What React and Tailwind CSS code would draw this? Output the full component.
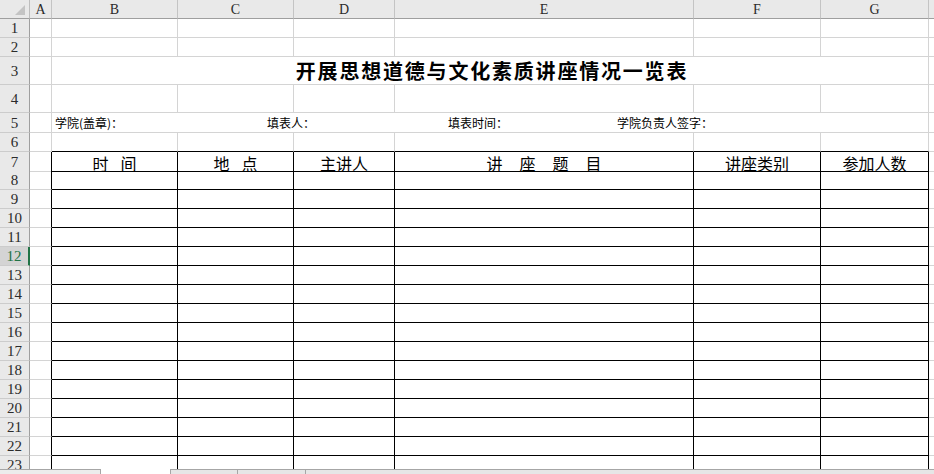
import React from "react";

const COLS =
  "grid grid-cols-[30px_22px_126px_116px_101px_299px_127px_108px_1fr]";
const G = "border-r border-b border-[#d4d4d4]";
const T = "border-r border-b border-black";
const CJK = "font-['Noto_Sans_CJK_SC',sans-serif]";

function RowHead({ n, selected }) {
  if (selected) {
    return (
      <div className="flex items-center justify-center bg-[#d4d4d4] border-r-2 border-b border-r-[#217346] border-b-[#cccccc] font-['Liberation_Serif',serif] text-[15px] leading-none text-[#217346] pt-[1px]">
        {n}
      </div>
    );
  }
  return (
    <div className="flex items-center justify-center bg-[#e9e9e9] border-r border-b border-r-[#9f9f9f] border-b-[#cccccc] font-['Liberation_Serif',serif] text-[15px] leading-none text-[#2b2b2b] pt-[1px]">
      {n}
    </div>
  );
}

function PlainRow({ n, h }) {
  return (
    <div className={`${COLS} ${h}`}>
      <RowHead n={n} />
      <div className={G} />
      <div className={G} />
      <div className={G} />
      <div className={G} />
      <div className={G} />
      <div className={G} />
      <div className={G} />
      <div className="border-b border-[#d4d4d4]" />
    </div>
  );
}

function HeaderCell({ label, gap }) {
  const chars = label.split("");
  return (
    <div className={`${T} flex items-start justify-center pt-[3px]`}>
      <div
        className={`flex ${CJK} text-[16px] leading-[16px] text-black ${gap}`}
      >
        {chars.map((c, i) => (
          <span key={i}>{c}</span>
        ))}
      </div>
    </div>
  );
}

function TableRow({ n, selected }) {
  return (
    <div className={`${COLS} h-[19px]`}>
      <RowHead n={n} selected={selected} />
      <div className="border-r border-b border-r-black border-b-[#d4d4d4]" />
      <div className={T} />
      <div className={T} />
      <div className={T} />
      <div className={T} />
      <div className={T} />
      <div className={T} />
      <div className="border-b border-[#d4d4d4]" />
    </div>
  );
}

export default function App() {
  const letters = ["A", "B", "C", "D", "E", "F", "G"];
  const tableRows = [];
  for (let i = 8; i <= 23; i++) tableRows.push(i);

  return (
    <div className="w-[934px] h-[474px] overflow-hidden bg-white flex flex-col">
      <div className="h-[469px] overflow-hidden">
        {/* column header */}
        <div className={`${COLS} h-[19px]`}>
          <div className="relative bg-[#e9e9e9] border-r border-b border-r-[#bdbdbd] border-b-[#9f9f9f]">
            <svg
              className="absolute right-[4px] bottom-[3px]"
              width="10"
              height="10"
              viewBox="0 0 10 10"
            >
              <polygon points="10,0 10,10 0,10" fill="#c4c4c4" />
            </svg>
          </div>
          {letters.map((l) => (
            <div
              key={l}
              className="flex items-center justify-center bg-[#e9e9e9] border-r border-b border-r-[#c4c4c4] border-b-[#9f9f9f] font-['Liberation_Serif',serif] text-[14px] leading-none text-[#2b2b2b] pt-[2px]"
            >
              {l}
            </div>
          ))}
          <div className="bg-[#e9e9e9] border-b border-b-[#9f9f9f]" />
        </div>

        <PlainRow n={1} h="h-[19px]" />
        <PlainRow n={2} h="h-[19px]" />

        {/* row 3 title */}
        <div className={`${COLS} h-[28px]`}>
          <RowHead n={3} />
          <div className={G} />
          <div
            className={`col-span-6 ${G} flex items-center justify-center pl-[4px] ${CJK} font-bold text-[20px] leading-none tracking-[1.8px] text-black`}
          >
            开展思想道德与文化素质讲座情况一览表
          </div>
          <div className="border-b border-[#d4d4d4]" />
        </div>

        <PlainRow n={4} h="h-[28px]" />

        {/* row 5 */}
        <div className={`${COLS} h-[20px]`}>
          <RowHead n={5} />
          <div className={G} />
          <div
            className={`col-span-6 ${G} flex items-end pb-[3px] pl-[3px] ${CJK} text-[12px] leading-[12px] text-black`}
          >
            <span className="w-[212px] shrink-0">学院(盖章)：</span>
            <span className="w-[181px] shrink-0">填表人：</span>
            <span className="w-[169px] shrink-0">填表时间：</span>
            <span>学院负责人签字：</span>
          </div>
          <div className="border-b border-[#d4d4d4]" />
        </div>

        {/* row 6 */}
        <div className={`${COLS} h-[19px]`}>
          <RowHead n={6} />
          <div className={G} />
          <div className="border-r border-b border-r-[#d4d4d4] border-b-black" />
          <div className="border-r border-b border-r-[#d4d4d4] border-b-black" />
          <div className="border-r border-b border-r-[#d4d4d4] border-b-black" />
          <div className="border-r border-b border-r-[#d4d4d4] border-b-black" />
          <div className="border-r border-b border-r-[#d4d4d4] border-b-black" />
          <div className="border-r border-b border-r-[#d4d4d4] border-b-black" />
          <div className="border-b border-[#d4d4d4]" />
        </div>

        {/* row 7 headers */}
        <div className={`${COLS} h-[19px]`}>
          <RowHead n={7} />
          <div className="border-r border-b border-r-black border-b-[#d4d4d4]" />
          <HeaderCell label="时间" gap="gap-[12px]" />
          <HeaderCell label="地点" gap="gap-[12px]" />
          <HeaderCell label="主讲人" gap="gap-0" />
          <HeaderCell label="讲座题目" gap="gap-[17px]" />
          <HeaderCell label="讲座类别" gap="gap-0" />
          <HeaderCell label="参加人数" gap="gap-0" />
          <div className="border-b border-[#d4d4d4]" />
        </div>

        {tableRows.map((n) => (
          <TableRow key={n} n={n} selected={n === 12} />
        ))}
      </div>

      {/* sheet tab bar */}
      <div className="h-[5px] flex bg-[#e6e6e6]">
        <div className="w-[101px] shrink-0 bg-[#ececec] border-t border-r border-[#a6a6a6]" />
        <div className="w-[69px] shrink-0 bg-white" />
        <div className="w-[68px] shrink-0 border-t border-l border-r border-[#a6a6a6]" />
        <div className="w-[68px] shrink-0 border-t border-r border-[#a6a6a6]" />
        <div className="flex-1 border-t border-[#a6a6a6]" />
      </div>
    </div>
  );
}
